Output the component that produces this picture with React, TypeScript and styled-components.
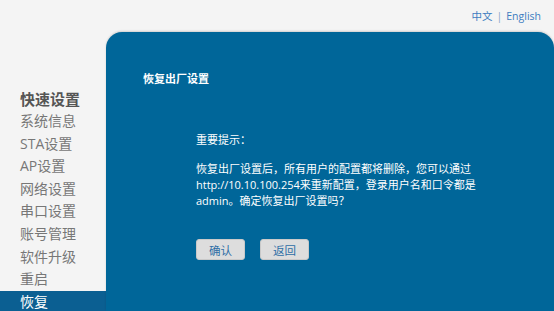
import styled, { createGlobalStyle } from "styled-components"

const GlobalStyle = createGlobalStyle`
    html, body {
        margin: 0;
        padding: 0;
        height: 100%;
        background: #f4f4f4;
        font-family: "Open Sans", "Noto Sans CJK SC", sans-serif;
    }
    #root {
        height: 100%;
    }
`

const Page = styled.div`
    display: flex;
    flex-direction: column;
    height: 311px;
    width: 554px;
    overflow: hidden;
    background: #f4f4f4;
`

const TopBar = styled.div`
    display: flex;
    justify-content: flex-end;
    align-items: center;
    height: 32px;
    padding-right: 13px;
    padding-bottom: 1px;
    box-sizing: border-box;
    font-size: 10.5px;
`

const LangLink = styled.a`
    color: #3d7cc0;
    text-decoration: none;
`

const Sep = styled.span`
    color: #8aa6c6;
    margin: 0 4px;
`

const Main = styled.div`
    display: flex;
    flex: 1;
    min-height: 0;
`

const Sidebar = styled.nav`
    width: 106px;
    flex-shrink: 0;
    display: flex;
    flex-direction: column;
    padding-top: 56px;
    box-sizing: border-box;
`

const MenuTitle = styled.div`
    font-size: 15px;
    font-weight: bold;
    color: #555;
    padding-left: 20px;
    line-height: 22px;
`

const MenuItem = styled.div<{ $active?: boolean }>`
    font-size: 14px;
    line-height: 22.6px;
    height: 22.6px;
    padding-left: 20px;
    color: ${p => (p.$active ? "#ffffff" : "#777777")};
    background: ${p => (p.$active ? "#0b5f92" : "transparent")};
`

const Panel = styled.section`
    flex: 1;
    background: #006699;
    border-radius: 16px 16px 0 0;
    box-shadow: 0 -1px 2px rgba(0, 0, 0, 0.15);
    padding: 39px 0 0 37px;
    box-sizing: border-box;
    color: #ffffff;
`

const PanelTitle = styled.h2`
    margin: 0;
    font-size: 11px;
    font-weight: bold;
    line-height: 16px;
`

const Content = styled.div`
    margin: 45px 0 0 53px;
    font-size: 11px;
    line-height: 16px;
`

const Paragraph = styled.p`
    margin: 0 0 13px 0;
`

const Buttons = styled.div`
    display: flex;
    gap: 15px;
    margin-top: 30px;
`

const Button = styled.button`
    width: 49px;
    height: 21px;
    background: #dddddd;
    border: 1px solid #c9c9c9;
    border-radius: 3px;
    color: #2e6ea6;
    font-family: "Open Sans", "Noto Sans CJK SC", sans-serif;
    font-size: 11.5px;
    padding: 0;
    cursor: pointer;
`

const menu = ["系统信息", "STA设置", "AP设置", "网络设置", "串口设置", "账号管理", "软件升级", "重启"]

export default function App() {
    return (
        <Page>
            <GlobalStyle />
            <TopBar>
                <LangLink href="#">中文</LangLink>
                <Sep>|</Sep>
                <LangLink href="#">English</LangLink>
            </TopBar>
            <Main>
                <Sidebar>
                    <MenuTitle>快速设置</MenuTitle>
                    {menu.map(text => (
                        <MenuItem key={text}>{text}</MenuItem>
                    ))}
                    <MenuItem $active>恢复</MenuItem>
                </Sidebar>
                <Panel>
                    <PanelTitle>恢复出厂设置</PanelTitle>
                    <Content>
                        <Paragraph>重要提示：</Paragraph>
                        <Paragraph>
                            恢复出厂设置后，所有用户的配置都将删除，您可以通过<br />
                            http://10.10.100.254来重新配置，登录用户名和口令都是<br />
                            admin。确定恢复出厂设置吗？
                        </Paragraph>
                        <Buttons>
                            <Button>确认</Button>
                            <Button>返回</Button>
                        </Buttons>
                    </Content>
                </Panel>
            </Main>
        </Page>
    )
}
